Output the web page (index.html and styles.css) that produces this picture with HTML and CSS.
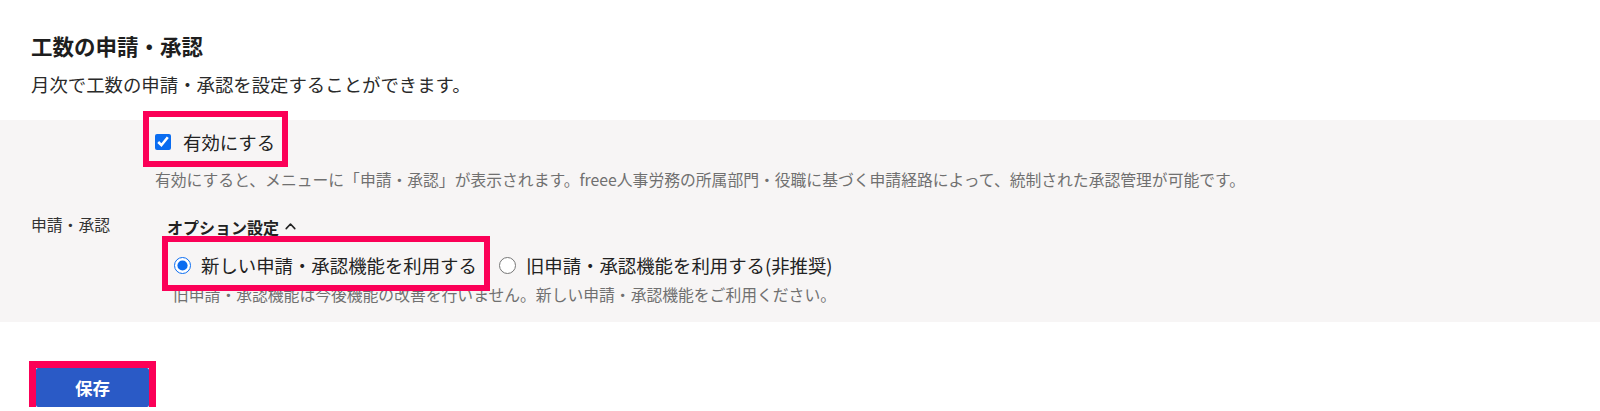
FILE: index.html
```html
<!DOCTYPE html>
<html lang="ja">
<head>
<meta charset="utf-8">
<title>工数の申請・承認</title>
<link rel="stylesheet" href="styles.css">
</head>
<body>
<section class="header">
  <h2 class="title">工数の申請・承認</h2>
  <p class="desc">月次で工数の申請・承認を設定することができます。</p>
</section>
<section class="panel">
  <div class="label-col">申請・承認</div>
  <div class="content-col">
    <label class="check-row mark">
      <input type="checkbox" class="chk" checked>
      <span>有効にする</span>
    </label>
    <p class="help help1">有効にすると、メニューに「申請・承認」が表示されます。freee人事労務の所属部門・役職に基づく申請経路によって、統制された承認管理が可能です。</p>
    <div class="options">
      <div class="opt-heading">オプション設定
        <svg class="caret" width="11" height="8" viewBox="0 0 11 8"><path d="M1.2 6.6 L5.5 2 L9.8 6.6" fill="none" stroke="#222" stroke-width="1.6" stroke-linejoin="round" stroke-linecap="round"/></svg>
      </div>
      <div class="radio-row">
        <label class="radio mark">
          <input type="radio" name="ver" class="rad" checked>
          <span>新しい申請・承認機能を利用する</span>
        </label>
        <label class="radio radio-old">
          <input type="radio" name="ver" class="rad">
          <span>旧申請・承認機能を利用する(非推奨)</span>
        </label>
      </div>
      <p class="help help2">旧申請・承認機能は今後機能の改善を行いません。新しい申請・承認機能をご利用ください。</p>
    </div>
  </div>
</section>
<section class="actions">
  <button class="save">保存</button>
</section>
</body>
</html>
```
FILE: styles.css
```css
* { box-sizing: border-box; }
body {
  margin: 0;
  background: #fff;
  color: #222;
  font-family: "Noto Sans CJK JP", "Noto Sans", sans-serif;
}
.header {
  padding: 32px 31px 0;
}
.title {
  margin: 0;
  font-size: 21.5px;
  line-height: 28px;
  font-weight: 700;
  color: #1e1e1e;
}
.desc {
  margin: 11px 0 0;
  font-size: 18.4px;
  line-height: 26px;
  color: #2a2a2a;
}
.panel {
  margin-top: 23px;
  background: #f7f5f5;
  display: grid;
  grid-template-columns: 152px 1fr;
  padding: 9px 0 16px;
}
.label-col {
  padding: 85px 0 0 31px;
  font-size: 15.8px;
  line-height: 22px;
  color: #333;
}
.content-col {
  display: flex;
  flex-direction: column;
  align-items: flex-start;
}
.mark { position: relative; }
.mark::after {
  content: "";
  position: absolute;
  border: 6px solid #fb0057;
  pointer-events: none;
}
.check-row {
  display: inline-flex;
  align-items: center;
  gap: 12px;
  margin-left: 3px;
  font-size: 18.4px;
  line-height: 26px;
  color: #222;
}
.check-row::after {
  left: -12px;
  right: -13px;
  top: -18px;
  bottom: -12px;
}
.chk {
  width: 16px;
  height: 16px;
  margin: 0;
  accent-color: #0a6cf0;
}
.help {
  margin: 0;
  font-size: 15.8px;
  line-height: 22px;
  color: #707070;
}
.help1 {
  margin: 14px 0 0 3px;
}
.options {
  margin-left: 15px;
  display: flex;
  flex-direction: column;
  align-items: flex-start;
}
.opt-heading {
  margin-top: 25px;
  font-size: 16px;
  line-height: 22px;
  font-weight: 700;
  color: #222;
  display: flex;
  align-items: center;
  gap: 6px;
}
.caret { display: block; margin-top: -2px; }
.radio-row {
  display: flex;
  align-items: center;
  gap: 22px;
  margin: 13px 0 0 7px;
}
.radio {
  display: inline-flex;
  align-items: center;
  gap: 10px;
  font-size: 18.4px;
  line-height: 28px;
  color: #222;
}
.radio.mark::after {
  left: -12px;
  right: -13px;
  top: -15px;
  bottom: -12px;
}
.rad {
  width: 17px;
  height: 17px;
  margin: 0;
  accent-color: #0a6cf0;
}
.help2 {
  margin: 5px 0 0 6px;
}
.actions {
  padding: 46px 0 0 36px;
}
.save {
  position: relative;
  width: 113px;
  height: 39px;
  border: none;
  border-radius: 2px;
  background: #2a5ac6;
  color: #fff;
  font-family: "Noto Sans CJK JP", sans-serif;
  font-size: 17.5px;
  font-weight: 700;
  padding: 0;
}
.save::after {
  content: "";
  position: absolute;
  left: -7px;
  right: -7px;
  top: -7px;
  bottom: -7px;
  border: 7px solid #fb0057;
}
```
